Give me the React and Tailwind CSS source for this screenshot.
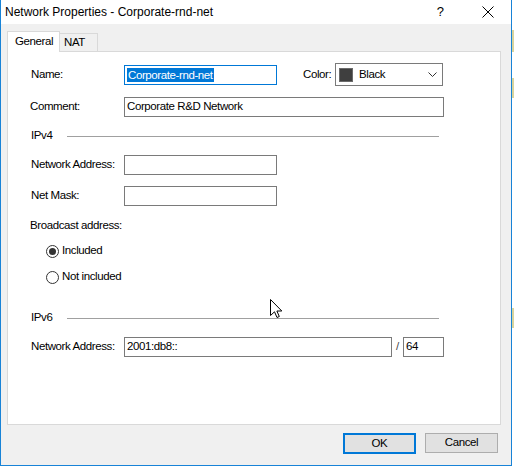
import React from "react";

const font = { fontFamily: '"Liberation Sans", Arial, sans-serif' };

const Field = ({ width, value, className = "" }) => (
  <div
    className={`h-[20px] border border-[#7a7a7a] bg-white pl-[2px] flex items-center text-black ${className}`}
    style={{ width }}
  >
    {value}
  </div>
);

const Radio = ({ checked, label }) => (
  <div className="flex items-center h-[14px] pl-[15px]">
    <div className="w-[13px] h-[13px] rounded-full border border-[#333] bg-white flex items-center justify-center">
      {checked && <div className="w-[7px] h-[7px] rounded-full bg-[#333]" />}
    </div>
    <span className="ml-[3px]">{label}</span>
  </div>
);

const Section = ({ title }) => (
  <div className="flex items-center h-[14px]">
    <span className="w-[36px]">{title}</span>
    <div className="w-[372px] h-px bg-[#a0a0a0] mt-[1px]" />
  </div>
);

export default function App() {
  return (
    <div className="relative w-[514px] h-[466px] flex bg-white overflow-hidden" style={font}>
      {/* dialog window */}
      <div className="w-[512px] h-[466px] flex flex-col border-l border-r border-b border-[#1883d7] bg-[#f0f0f0]">
        {/* title bar */}
        <div className="h-[24px] bg-white flex items-center shrink-0">
          <span className="pl-[4px] text-[12px] text-black">Network Properties - Corporate-rnd-net</span>
          <span className="ml-auto text-[13px] text-black mr-[38px]">?</span>
          <svg width="12" height="12" viewBox="0 0 12 12" className="mr-[17px]">
            <path d="M0.5 0.5 L11.5 11.5 M11.5 0.5 L0.5 11.5" stroke="#000" strokeWidth="1" />
          </svg>
        </div>

        {/* body */}
        <div className="flex-1 flex flex-col pt-[7px] pl-[6px] pr-[10px] text-[11.5px] tracking-[-0.4px] text-black">
          {/* tabs */}
          <div className="flex items-start h-[20px]">
            <div className="relative z-10 h-[21px] w-[53px] bg-white border-t border-l border-r border-[#d9d9d9] flex items-center pl-[7px]">
              General
            </div>
            <div className="mt-[2px] h-[18px] w-[38px] border-t border-r border-[#d9d9d9] flex items-center pl-[4px]">
              NAT
            </div>
          </div>

          {/* panel */}
          <div className="h-[374px] bg-white border border-[#d9d9d9] flex flex-col pl-[23px]">
            <div className="mt-[11px] h-[23px] flex items-center">
              <span className="w-[93px]">Name:</span>
              <div className="h-[20px] w-[153px] border border-[#0078d7] bg-white pl-[2px] flex items-center">
                <span className="bg-[#0078d7] text-white leading-[14px] px-px">Corporate-rnd-net</span>
              </div>
              <span className="ml-[26px] w-[32px]">Color:</span>
              <div className="h-[23px] w-[108px] border border-[#7a7a7a] bg-white flex items-center pl-[3px]">
                <div className="w-[14px] h-[14px] bg-[#3f3f3f] border border-[#6b6b6b]" />
                <span className="ml-[6px]">Black</span>
                <svg width="9" height="5" viewBox="0 0 9 5" className="ml-auto mr-[5px]">
                  <path d="M0.5 0.5 L4.5 4.5 L8.5 0.5" fill="none" stroke="#333" strokeWidth="1" />
                </svg>
              </div>
            </div>

            <div className="mt-[11px] h-[20px] flex items-center">
              <span className="w-[93px] -ml-px pl-0">Comment:</span>
              <Field width={320} value="Corporate R&D Network" className="ml-px" />
            </div>

            <div className="mt-[12px]">
              <Section title="IPv4" />
            </div>

            <div className="mt-[12px] h-[20px] flex items-center">
              <span className="w-[93px]">Network Address:</span>
              <Field width={153} value="" />
            </div>

            <div className="mt-[11px] h-[20px] flex items-center">
              <span className="w-[93px]">Net Mask:</span>
              <Field width={153} value="" />
            </div>

            <div className="mt-[13px] h-[14px] flex items-center -ml-px">Broadcast address:</div>

            <div className="mt-[11px]">
              <Radio checked label="Included" />
            </div>
            <div className="mt-[12px]">
              <Radio label="Not included" />
            </div>

            <div className="mt-[27px]">
              <Section title="IPv6" />
            </div>

            <div className="mt-[12px] h-[20px] flex items-center">
              <span className="w-[93px]">Network Address:</span>
              <Field width={268} value="2001:db8::" />
              <span className="w-[11px] text-center text-[#444]">/</span>
              <Field width={41} value="64" />
            </div>
          </div>

          {/* buttons */}
          <div className="mt-[8px] h-[21px] flex justify-end gap-[9px] pr-[3px]">
            <button className="w-[73px] h-[21px] border-2 border-[#0078d7] bg-[#e1e1e1] text-black">OK</button>
            <button className="w-[73px] h-[20px] border border-[#adadad] bg-[#e1e1e1] text-black">Cancel</button>
          </div>
        </div>
      </div>

      {/* background app strip */}
      <div className="w-[2px] h-[466px] flex flex-col">
        <div className="h-[30px] bg-white" />
        <div className="h-[22px] bg-[#d8d49c]" />
        <div className="h-[26px] bg-white" />
        <div className="h-[20px] bg-[#d8d49c]" />
        <div className="h-[210px] bg-white" />
        <div className="h-[20px] bg-[#d8d49c]" />
        <div className="flex-1 bg-white" />
      </div>

      {/* mouse cursor */}
      <svg width="13" height="20" viewBox="0 0 13 20" className="absolute left-[270px] top-[299px]">
        <path
          d="M0.5 0.5 L0.5 16.5 L4.5 12.8 L7 18.5 L9.3 17.5 L6.9 12 L11.8 12 Z"
          fill="#fff"
          stroke="#000"
          strokeWidth="1"
          strokeLinejoin="miter"
        />
      </svg>
    </div>
  );
}
